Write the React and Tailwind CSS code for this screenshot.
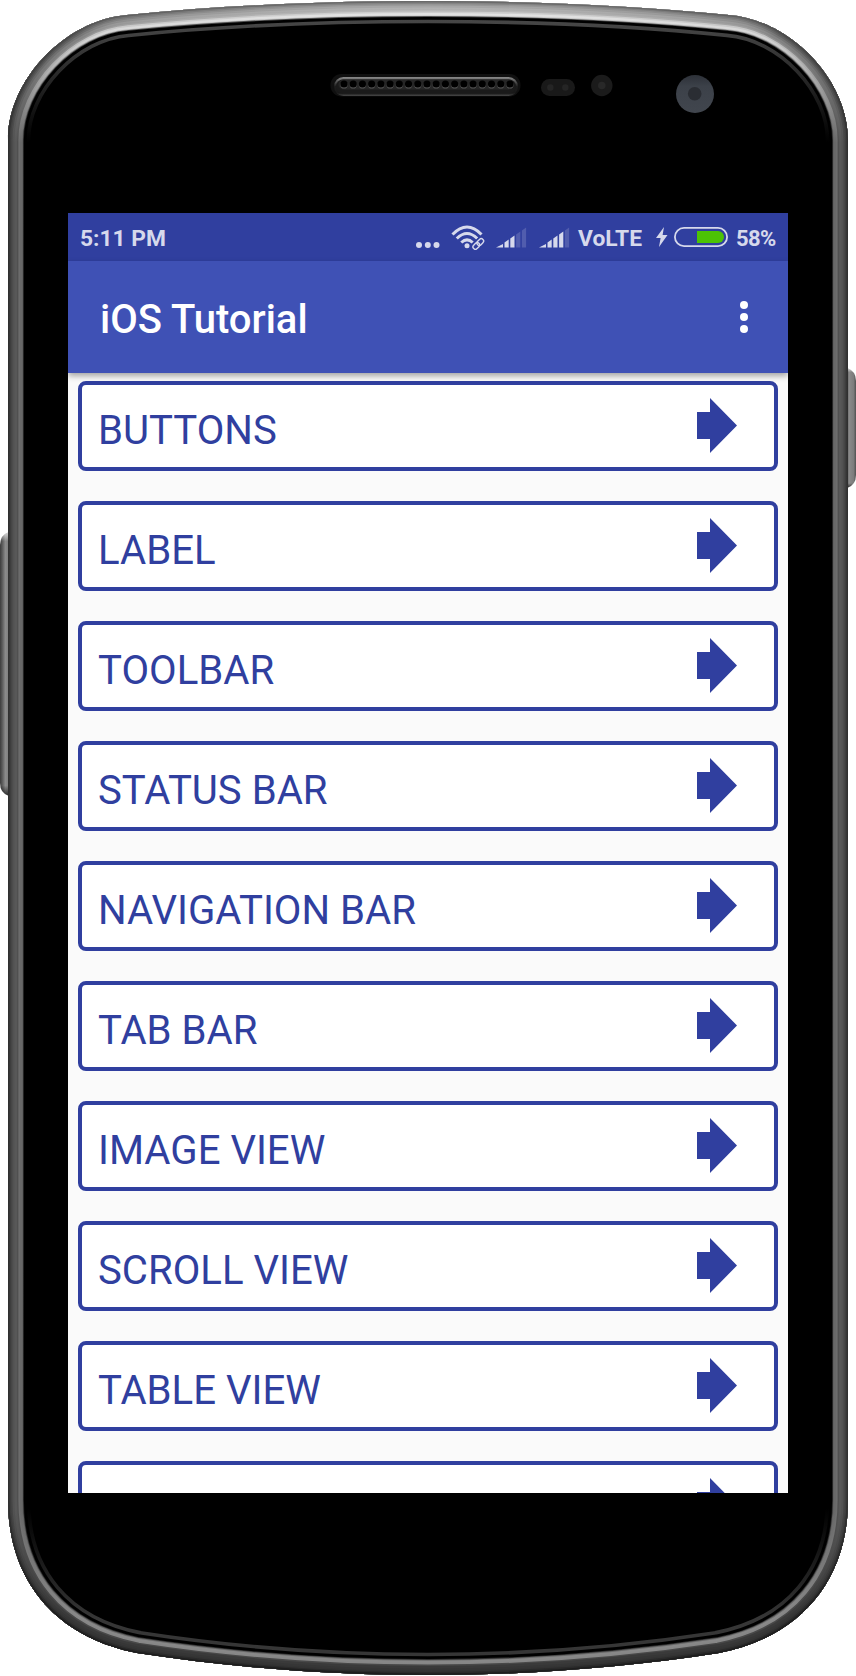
// src/App.jsx

const topics = [
  'BUTTONS',
  'LABEL',
  'TOOLBAR',
  'STATUS BAR',
  'NAVIGATION BAR',
  'TAB BAR',
  'IMAGE VIEW',
  'SCROLL VIEW',
  'TABLE VIEW',
  '',
];

const BODY =
  'M8 140C8 80 65 20 127 15C225 5 330 1 428 1C526 1 631 5 729 15C791 20 848 80 848 140V1500C848 1580 801 1637 719 1653C621 1668 526 1675 428 1675C330 1675 235 1668 137 1653C55 1637 8 1580 8 1500Z';

// Rim shading, from the inside out: [distance from the edge, top, shoulder, side, bottom]
const rim = [
  [22.3, '#4c4c4c', '#404040', '#000000', '#363636'],
  [18.7, '#000000', '#000000', '#000000', '#000000'],
  [15.9, '#5a5a5a', '#4a4a4a', '#222222', '#303030'],
  [15.1, '#dcdcdc', '#a8a8a8', '#5e5e5e', '#686868'],
  [14.2, '#e6e6e6', '#d4d4d4', '#686868', '#888888'],
  [12, '#d0d0d0', '#c4c4c4', '#6c6c6c', '#868686'],
  [10.4, '#bdbdbd', '#929292', '#505050', '#484848'],
  [9, '#b4b4b4', '#848484', '#585858', '#3a3a3a'],
  [6.5, '#a6a6a6', '#747474', '#525252', '#363636'],
  [4.5, '#969696', '#626262', '#464646', '#333333'],
  [3, '#848484', '#545454', '#3e3e3e', '#2a2a2a'],
  [1.6, '#6a6a6a', '#484848', '#303030', '#1e1e1e'],
];

function PhoneBody() {
  return (
    <svg className="absolute inset-0 h-full w-full" viewBox="0 0 856 1676" aria-hidden="true">
      <defs>
        <clipPath id="body">
          <path d={BODY} />
        </clipPath>
        {rim.map(([d, top, shoulder, side, bottom]) => (
          <linearGradient key={d} id={`rim-${d}`} gradientUnits="userSpaceOnUse" x1="0" y1="0" x2="0" y2="1676">
            <stop offset="0.004" stopColor={top} />
            <stop offset="0.022" stopColor={shoulder} />
            <stop offset="0.085" stopColor={side} />
            <stop offset="0.9" stopColor={side} />
            <stop offset="0.965" stopColor={bottom} />
          </linearGradient>
        ))}
        <linearGradient id="key">
          <stop offset="0" stopColor="#3c3c3c" />
          <stop offset="0.2" stopColor="#5c5c5c" />
          <stop offset="0.45" stopColor="#8a8a8a" />
          <stop offset="0.8" stopColor="#7c7c7c" />
          <stop offset="1" stopColor="#505050" />
        </linearGradient>
        <linearGradient id="keyEnds" x1="0" y1="0" x2="0" y2="1">
          <stop offset="0" stopColor="#ffffff" stopOpacity="0.7" />
          <stop offset="0.035" stopColor="#ffffff" stopOpacity="0" />
          <stop offset="0.96" stopColor="#000000" stopOpacity="0" />
          <stop offset="1" stopColor="#000000" stopOpacity="0.7" />
        </linearGradient>
        <linearGradient id="slot" x1="0" y1="0" x2="0" y2="1">
          <stop offset="0" stopColor="#8a8a8a" />
          <stop offset="0.5" stopColor="#1c1c1c" />
          <stop offset="0.85" stopColor="#181818" />
          <stop offset="1" stopColor="#484848" />
        </linearGradient>
        <linearGradient id="lens" x1="0" y1="0" x2="0" y2="1">
          <stop offset="0" stopColor="#2d3138" />
          <stop offset="0.3" stopColor="#3c4149" />
          <stop offset="1" stopColor="#41464e" />
        </linearGradient>
      </defs>

      {/* Volume and power keys */}
      <path d="M12 532H9Q0 535 0 545V783Q0 793 9 796H12Z" fill="url(#key)" />
      <path d="M12 532H9Q0 535 0 545V783Q0 793 9 796H12Z" fill="url(#keyEnds)" />
      <path d="M844 368H847Q856 371 856 381V475Q856 485 847 488H844Z" fill="url(#key)" />
      <path d="M844 368H847Q856 371 856 381V475Q856 485 847 488H844Z" fill="url(#keyEnds)" />

      <path d={BODY} fill="#000000" />
      <g clipPath="url(#body)" fill="none">
        {rim.map(([d]) => (
          <path key={d} d={BODY} stroke={`url(#rim-${d})`} strokeWidth={d * 2} />
        ))}
      </g>

      {/* Speaker */}
      <rect x="330.5" y="74" width="190" height="22.5" rx="11" fill="#101010" />
      <rect x="334" y="77" width="184" height="19" rx="9.5" fill="url(#slot)" />
      <rect x="336" y="79.5" width="180" height="14" rx="7" fill="#1a1a1a" />
      <rect x="338.5" y="79.5" width="175" height="10" rx="5" fill="#262626" />
      {Array.from({ length: 19 }, (_, i) => (
        <g key={i}>
          <circle cx={344 + i * 9.22} cy="84.9" r="3.6" fill="#555555" />
          <circle cx={344 + i * 9.22} cy="84" r="3.6" fill="#000000" />
        </g>
      ))}

      {/* Sensors and front camera */}
      <rect x="541" y="79" width="34" height="17" rx="8.5" fill="#191919" />
      <circle cx="550.3" cy="87.5" r="3.2" fill="#252525" />
      <circle cx="565.3" cy="87.5" r="3.2" fill="#252525" />
      <circle cx="601.8" cy="85.5" r="10.7" fill="#1b1b1b" />
      <circle cx="601.8" cy="85.5" r="3.8" fill="#282828" />
      <circle cx="695" cy="94" r="19" fill="url(#lens)" />
      <circle cx="694.7" cy="93.7" r="6.8" fill="#2a2d33" />
    </svg>
  );
}

function SignalIcon({ bars, className }) {
  return (
    <svg className={className} width="31" height="22" viewBox="0 0 31 22" fill="#d6d9ec">
      <path d="M0 21.5L7 18V21.5Z" />
      {[0, 1, 2, 3].map((i) => (
        <path
          key={i}
          d={`M${8.5 + i * 5.8} ${16.5 - i * 4}L${12.7 + i * 5.8} ${13.5 - i * 4}V21.5H${8.5 + i * 5.8}Z`}
          opacity={i < bars ? 1 : 0.2}
        />
      ))}
    </svg>
  );
}

function StatusBar() {
  return (
    <div className="flex h-12 shrink-0 items-center bg-[#303f9f] pl-3 text-[22.8px] font-bold text-[#d6d9ec]">
      <span className="pt-[5px] leading-none">5:11 PM</span>
      <svg className="mt-px ml-auto" width="26" height="22" viewBox="0 0 26 22" fill="currentColor">
        <circle cx="4" cy="18" r="3" />
        <circle cx="12.8" cy="18" r="3" />
        <circle cx="21.5" cy="18" r="3" />
      </svg>
      <svg className="ml-2.5" width="34" height="26" viewBox="0 0 34 26" fill="none" stroke="currentColor" strokeWidth="3">
        <path d="M1.5 10.5Q16 -4.5 30.5 10.5" />
        <path d="M5.8 14.5Q16 4.5 26.2 14.5" />
        <path d="M10.3 18.5Q16 13.2 21.7 18.5" />
        <circle cx="16" cy="21.8" r="2.5" fill="currentColor" stroke="none" />
        <g strokeWidth="1.4" transform="rotate(-45 27.3 20)">
          <rect x="21.3" y="17.7" width="12" height="4.6" rx="2.3" stroke="#303f9f" strokeWidth="4" />
          <rect x="20.8" y="17.6" width="7.4" height="4.8" rx="2.4" />
          <rect x="26.4" y="17.6" width="7.4" height="4.8" rx="2.4" />
        </g>
      </svg>
      <SignalIcon bars={2} className="ml-[11px]" />
      <SignalIcon bars={3} className="ml-3" />
      <span className="ml-2 w-[64px] pt-[5px] leading-none">VoLTE</span>
      <svg className="ml-3.5" width="12" height="22" viewBox="0 0 12 22" fill="currentColor">
        <path d="M8 1L0 12H4.6L3 21L11.5 9H6.6Z" />
      </svg>
      <svg className="ml-1.5" width="54" height="20" viewBox="0 0 54 20" fill="none">
        <rect x="0.9" y="0.9" width="52.2" height="18.2" rx="9.1" stroke="currentColor" strokeWidth="1.8" />
        <path d="M23 4H44A6 6 0 0 1 44 16H23Z" fill="#4cc305" />
      </svg>
      <span className="ml-2 w-[52px] pt-1 text-[22px] leading-none tracking-[-0.6px]">58%</span>
    </div>
  );
}

function Toolbar() {
  return (
    <header className="relative z-10 flex h-28 shrink-0 items-center justify-between bg-[#3f51b5] pr-9 pl-8 text-white shadow-[0_3px_6px_rgba(0,0,0,0.35)]">
      <h1 className="pt-1.5 text-[40px] leading-none font-medium">iOS Tutorial</h1>
      <button type="button" aria-label="More options" className="flex w-4 flex-col items-center gap-1">
        <span className="h-2 w-2 rounded-full bg-white" />
        <span className="h-2 w-2 rounded-full bg-white" />
        <span className="h-2 w-2 rounded-full bg-white" />
      </button>
    </header>
  );
}

function TopicRow({ name }) {
  return (
    <li className="flex h-[90px] shrink-0 items-center justify-between rounded-lg border-4 border-[#303f9f] bg-white pr-9 pl-4">
      <span className="pt-2.5 text-[40.15px] leading-none">{name}</span>
      <svg className="mb-px" width="42" height="56" viewBox="0 0 42 56" fill="#303f9f">
        <path d="M1 14H14V0L41 27.5L14 55V41H1Z" />
      </svg>
    </li>
  );
}

export default function App() {
  return (
    <div className="relative h-[1676px] w-[856px] overflow-hidden bg-white pt-[213px] font-['Roboto',sans-serif]">
      <PhoneBody />
      <main className="relative mx-auto flex h-[1280px] w-[720px] flex-col overflow-hidden bg-[#fafafa]">
        <StatusBar />
        <Toolbar />
        <ul className="flex min-h-0 flex-1 flex-col gap-[30px] overflow-hidden px-2.5 pt-2 text-[#303f9f]">
          {topics.map((name, i) => (
            <TopicRow key={i} name={name} />
          ))}
        </ul>
      </main>
    </div>
  );
}
